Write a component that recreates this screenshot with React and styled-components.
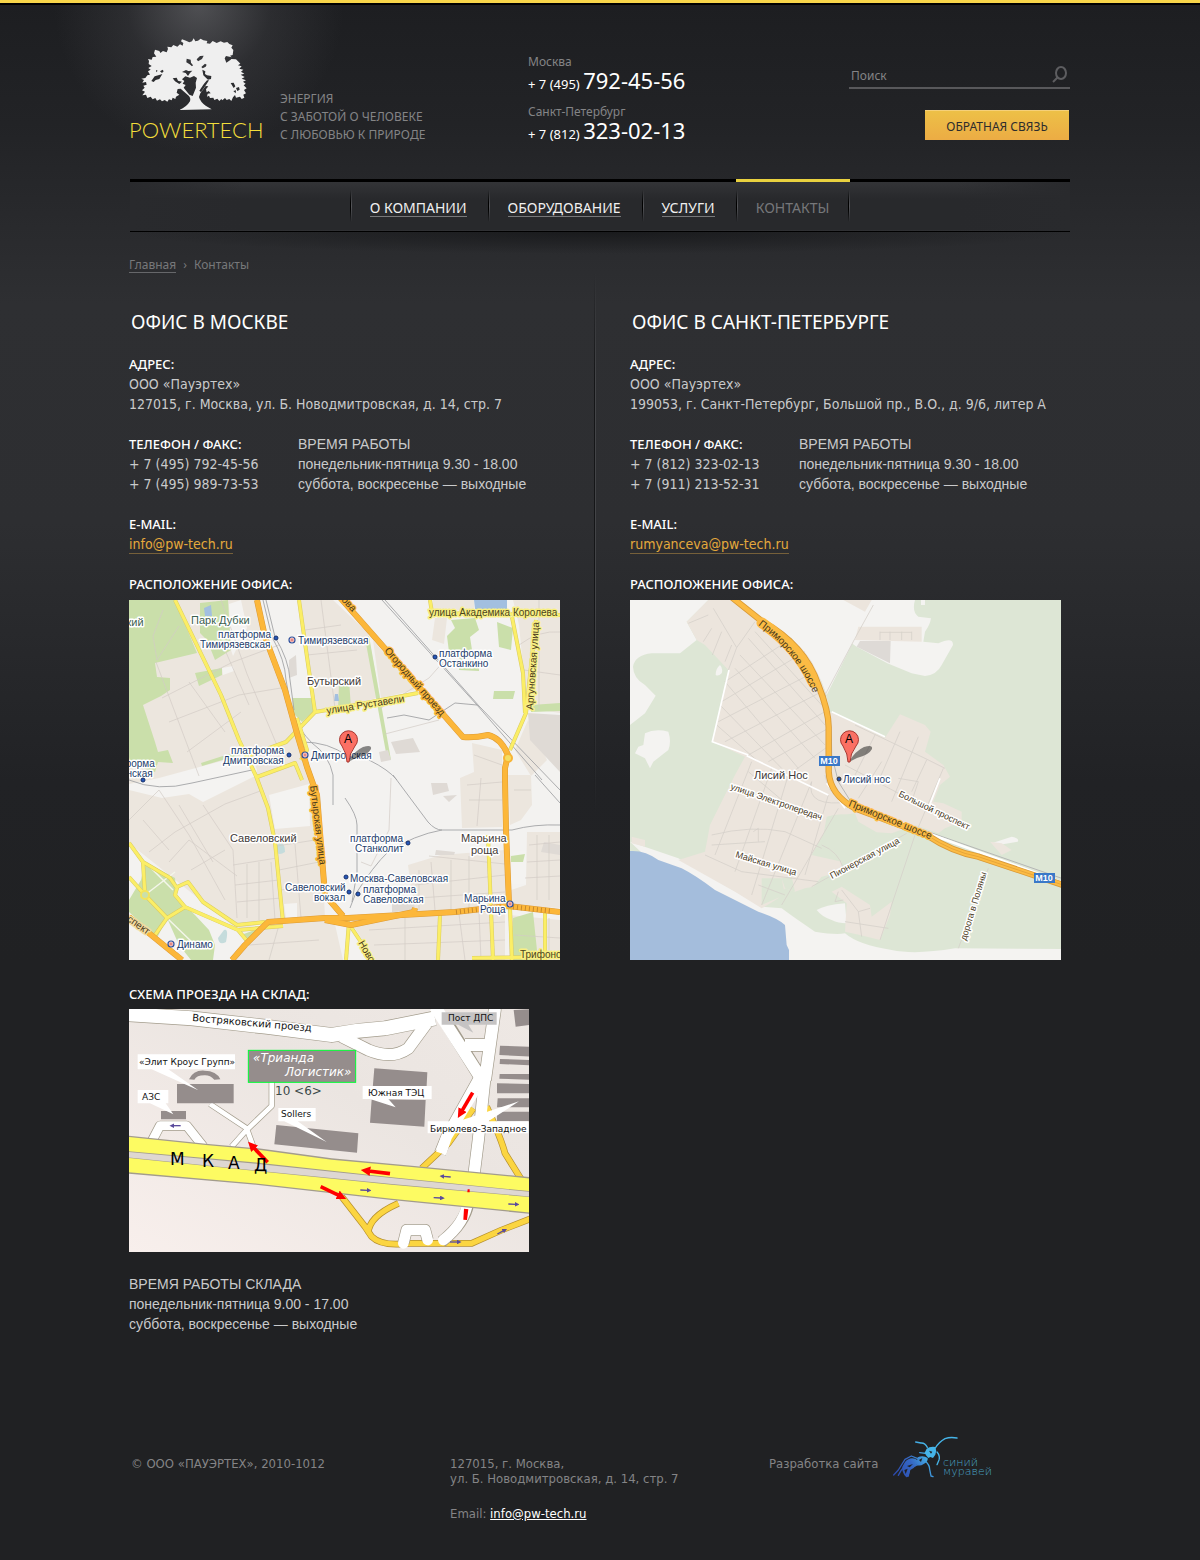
import React from 'react';
import styled, { createGlobalStyle } from 'styled-components';

const uiFont = '"Noto Sans", "Open Sans", sans-serif';
const textFont = '"DejaVu Sans Condensed", "Noto Sans", sans-serif';
const plainFont = '"Liberation Sans", Arial, sans-serif';

const GlobalStyle = createGlobalStyle`
  * {
    box-sizing: border-box;
  }

  body {
    margin: 0;
    background: #202123;
    color: #c9cacb;
    font-family: ${textFont};
    font-size: 14px;
    line-height: 20px;
  }

  h1, h2, h3, p, ul, ol, dl, dd {
    margin: 0;
    padding: 0;
    font-weight: 400;
  }

  ul, ol {
    list-style: none;
  }
`;

const Page = styled.div`
  border-top: 3px solid #f8d54a;
  background:
    radial-gradient(ellipse 145px 150px at 199px 0, rgba(130, 130, 134, 0.5), rgba(90, 90, 94, 0.24) 50%, transparent),
    linear-gradient(#1d1e21 0, #222326 120px, #2a2b2e 240px, #2e2f32 300px, #2d2e31 520px, #212225 780px, #202123 960px);
`;

const TopLine = styled.div`
  height: 2px;
  background: #000;
`;

const Wrap = styled.div`
  max-width: 942px;
  margin: 0 auto;
`;

const Header = styled.header`
  display: grid;
  grid-template-columns: 151px 248px 1fr 221px;
  align-items: start;
  padding: 33px 1px 35px 0;
  font-family: ${uiFont};
`;

const Logo = styled.a`
  display: block;
  color: #f3df3b;
  font-family: Lato, sans-serif;
  font-size: 22px;
  font-weight: 300;
  line-height: 24px;
  text-decoration: none;

  svg {
    display: block;
    margin-bottom: 7px;
  }
`;

const Slogan = styled.p`
  padding-top: 52px;
  color: #848486;
  font-size: 12px;
  line-height: 18px;
  text-transform: uppercase;
`;

const Phones = styled.dl`
  padding-top: 16px;

  dt {
    color: #848486;
    font-size: 12px;
    line-height: 16px;
  }

  dd {
    height: 24px;
    margin-bottom: 10px;
    color: #fff;
    font-size: 13px;
    line-height: 20px;
  }

  dd:last-child {
    margin-bottom: 0;
  }
`;

const PhoneNumber = styled.span`
  font-size: 22px;
`;

const Tools = styled.div`
  display: flex;
  flex-direction: column;
  align-items: flex-end;
  gap: 21px;
  padding-top: 26px;
`;

const Search = styled.form`
  display: flex;
  width: 100%;
  height: 25px;
  border-bottom: 2px solid #58585b;

  label {
    padding: 0 6px 0 2px;
    color: #848486;
    font-size: 12px;
    line-height: 24px;
  }

  input {
    flex: 1;
    min-width: 0;
    padding: 2px 0;
    border: 0;
    outline: 0;
    background: none;
    color: #c9cacb;
    font: 12px ${uiFont};
  }

  button {
    padding: 0 2px 2px 0;
    border: 0;
    background: none;
    cursor: pointer;
  }

  svg {
    display: block;
  }
`;

const FeedbackButton = styled.button`
  width: 144px;
  height: 30px;
  margin-right: 1px;
  padding: 2px 0 0;
  border: 0;
  border-top: 1px solid #f5d07a;
  background: linear-gradient(#edc047, #ecac44);
  color: #2c2c2d;
  font: 12px ${uiFont};
  text-transform: uppercase;
  cursor: pointer;
`;

const Nav = styled.nav`
  position: relative;
  margin: 0 1px;
  border-top: 3px solid #000;
  border-bottom: 1px solid #000;
  background:
    linear-gradient(90deg, #292a2d, transparent 12%, transparent 88%, #292a2d),
    linear-gradient(#333437, #28292c 34%, #28292c 98%, #38393c);
  font-family: ${uiFont};

  ul {
    display: flex;
    justify-content: center;
    height: 49px;
  }
`;

const NavShade = styled.div`
  height: 22px;
  margin: 0 1px;
  background: radial-gradient(ellipse 50% 100% at 50% 0, rgba(20, 21, 23, 0.75), transparent);
`;

const NavItem = styled.li`
  margin-top: -3px;
  padding: 17px 21px 0 20px;
  border-top: 3px solid ${props => (props.$active ? '#e9d13f' : 'transparent')};
  background:
    linear-gradient(transparent, #000 40%, #000 60%, transparent) left 8px / 1px 32px no-repeat,
    linear-gradient(transparent, #55565a 50%, transparent) 1px 8px / 1px 32px no-repeat;

  &:last-child {
    background:
      linear-gradient(transparent, #000 40%, #000 60%, transparent) left 8px / 1px 32px no-repeat,
      linear-gradient(transparent, #55565a 50%, transparent) 1px 8px / 1px 32px no-repeat,
      linear-gradient(transparent, #000 40%, #000 60%, transparent) right 1px top 8px / 1px 32px no-repeat,
      linear-gradient(transparent, #55565a 50%, transparent) right 8px / 1px 32px no-repeat;
  }

  a {
    display: block;
    border-bottom: 1px solid ${props => (props.$active ? 'transparent' : '#77787a')};
    color: ${props => (props.$active ? '#76777a' : '#f0f0f0')};
    font-size: 14px;
    line-height: 17px;
    text-decoration: none;
    text-transform: uppercase;
  }
`;

const Breadcrumbs = styled.ol`
  display: flex;
  gap: 7px;
  padding-top: 4px;
  color: #77787a;
  font-family: ${uiFont};
  font-size: 12px;
  line-height: 14px;

  a {
    display: block;
    border-bottom: 1px solid #66676a;
    color: inherit;
    text-decoration: none;
  }
`;

const Offices = styled.div`
  display: grid;
  grid-template-columns: 501fr 441fr;
`;

const Office = styled.section`
  padding-top: 35px;
  background: ${props => (props.$divided
    ? 'linear-gradient(transparent, #151618 20%, #151618 60%, transparent) right 35px top 0 / 1px 540px no-repeat, linear-gradient(transparent, #434447 20%, #434447 60%, transparent) right 34px top 0 / 1px 540px no-repeat'
    : 'none')};
`;

const OfficeTitle = styled.h2`
  margin-bottom: 18px;
  padding-left: 2px;
  color: #fff;
  font-family: ${uiFont};
  font-size: 19px;
  line-height: 28px;
  text-transform: uppercase;
`;

const Block = styled.div`
  margin-bottom: 20px;
`;

const MapBlock = styled.figure`
  margin: 0;

  figcaption {
    margin-bottom: ${props => props.$gap}px;
  }

  svg {
    display: block;
    width: 100%;
    max-width: ${props => props.$width}px;
    height: auto;
  }
`;

const Label = styled.h3`
  color: #fff;
  font-family: ${uiFont};
  font-size: 13px;
  font-weight: 500;
  text-transform: uppercase;
`;

const Columns = styled.div`
  display: grid;
  grid-template-columns: 169px 1fr;
  margin-bottom: 20px;
`;

const Hours = styled.div`
  font-family: ${plainFont};
  font-size: 14px;

  h3 {
    font-size: 14px;
    text-transform: uppercase;
  }
`;

const MailLink = styled.a`
  display: inline-block;
  border-bottom: 1px solid #76603a;
  color: #e5a93c;
  line-height: 17px;
  text-decoration: none;
`;

const MailRow = styled.p`
  height: 20px;
`;

const Warehouse = styled.section`
  padding-top: 24px;

  ${Hours} {
    margin-top: 22px;
  }
`;

const Footer = styled.footer`
  display: grid;
  grid-template-columns: 319px 319px 1fr;
  padding: 122px 0 39px 2px;
  color: #848486;
  font-size: 13px;
  line-height: 15px;

  p + p {
    margin-top: 20px;
  }

  p a {
    color: #fff;
  }
`;

const Developer = styled.a`
  display: flex;
  align-items: flex-start;
  gap: 10px;
  color: inherit;
  text-decoration: none;

  svg {
    margin-top: -20px;
  }
`;

function TreeIcon() {
  return (
    <svg width="132" height="73" viewBox="0 0 132 73" aria-hidden="true">
      <g transform="translate(-69 -38) scale(0.33333)">
        <path
          fill="#efefef"
          fillRule="evenodd"
          d="M358 330 Q380 321 390 304 Q393 294 386 287 L362 266 353 267 350 278 358 284 348 290 346 297 338 293 335 301 327 298 322 305 314 300 306 304 300 298 291 302 286 294 278 298 272 290 262 294 258 284 247 286 255 275 246 271 254 263 250 257 260 254 258 246 247 248 252 240 244 236 256 234 262 226 270 224 264 214 272 209 265 204 275 198 266 192 267 183 264 177 275 179 278 171 289 170 282 160 285 149 298 153 301 159 309 153 320 157 324 147 322 140 334 142 340 135 352 140 360 133 368 137 370 129 363 124 366 118 378 122 388 127 396 124 401 115 406 124 414 122 422 116 430 121 442 123 440 130 450 131 458 123 470 129 482 124 492 128 502 126 508 132 518 136 514 143 520 150 518 165 510 167 515 172 498 168 494 175 499 188 511 180 514 177 528 178 537 187 541 191 534 196 545 199 538 206 550 209 543 215 553 221 542 224 554 231 545 236 558 241 549 245 557 251 551 256 560 265 552 270 558 280 550 284 553 293 545 297 540 290 528 293 525 285 519 292 514 303 508 297 500 300 495 294 487 301 484 297 478 303 472 296 463 300 460 293 450 294 447 287 441 290 443 281 452 280 446 273 440 277 438 268 445 259 437 258 421 280 417 291 Q421 306 437 317 L455 328 Z
          M366 238 L376 229 390 233 402 228 411 234 407 248 408 263 398 288 388 284 371 263 377 255 368 251 373 243Z
          M380 176 L392 179 393 188 399 196 396 199 389 193 379 187Z
          M410 178 L420 168 431 167 426 177 414 184Z
          M424 201 L435 191 440 194 437 200 428 205Z
          M427 209 L436 214 435 222 441 226 454 228 453 237 444 239 430 226Z
          M366 216 L378 210 385 213 397 212 390 219 384 228 377 219Z
          M274 243 L284 229 300 224 307 222 298 237 287 240 281 246Z
          M300 214 L308 209 311 214 306 219Z
          M338 235 L350 233 354 242 366 245 358 252 345 244Z
          M288 210 L293 212 289 217Z
          M418 272 L432 251 441 241 447 241 438 255 423 276Z
          M512 249 L521 248 526 259 521 264 516 256Z
          M528 264 L537 261 539 269 532 273Z
          M520 273 L528 271 527 280Z"
        />
      </g>
    </svg>
  );
}

function AntIcon() {
  return (
    <svg width="108" height="46" viewBox="0 0 108 46" role="img" aria-label="Синий муравей">
      <defs>
        <linearGradient id="ant" x1="450" y1="170" x2="580" y2="90" gradientUnits="userSpaceOnUse">
          <stop offset="0" stopColor="#2a45a8" />
          <stop offset="0.45" stopColor="#3567c4" />
          <stop offset="0.8" stopColor="#45b4e8" />
        </linearGradient>
      </defs>
      <g transform="translate(-145 -16) scale(0.33333)">
        <g fill="none" stroke="url(#ant)" strokeLinecap="round" strokeLinejoin="round" strokeWidth="4">
          <path d="M577 84 Q588 66 606 56 Q622 50 642 54" />
          <path d="M553 82 Q546 68 534 69 L518 66" />
          <path d="M582 96 Q592 108 588 120 L582 134" />
          <path d="M546 122 Q560 134 560 148 L564 168 570 170" />
          <path d="M535 128 L516 138 506 128 498 150 496 168" />
          <path d="M524 126 L492 128 474 152 466 166" />
          <path d="M530 118 L505 108 486 118 466 150 452 165" />
          <path d="M548 100 L530 98" />
        </g>
        <path fill="url(#ant)" d="M551 86 Q560 79 577 81 Q582 92 577 104 L570 114 562 111 556 114 549 106 545 98Z" />
        <path fill="url(#ant)" d="M524 112 Q540 104 554 114 Q556 124 542 132 Q530 140 520 134Z" />
        <path fill="url(#ant)" d="M486 126 Q504 106 526 122 Q520 142 502 150 Q498 172 490 172 Q476 158 478 140Z" />
        <path fill="#202123" d="M558 92 L568 95 564 101Z M492 138 L510 132 500 142Z M484 150 L494 146 488 162Z M528 120 L538 114 534 126Z" />
      </g>
      <g fill="#4aa3c4" fontFamily='"DejaVu Sans", sans-serif' fontSize="11" fontWeight="200">
        <text x="55" y="30">синий</text>
        <text x="55" y="39">муравей</text>
      </g>
    </svg>
  );
}

function Roads({ paths, casing, fill, width }) {
  return (
    <g fill="none" strokeLinejoin="round">
      {paths.map(d => <path key={d} d={d} stroke={casing} strokeWidth={width + 1} />)}
      {paths.map(d => <path key={d} d={d} stroke={fill} strokeWidth={width} />)}
    </g>
  );
}

const haloProps = { paintOrder: 'stroke', strokeLinejoin: 'round', strokeWidth: 3 };

function MapLabels({ items, size, color, halo }) {
  return (
    <g fill={color} stroke={halo} fontSize={size} {...haloProps}>
      {items.map(([x, y, text]) => <text key={x + text + y} x={x} y={y}>{text}</text>)}
    </g>
  );
}

function StreetLabel({ x, y, angle, halo, children, size = 10, color = '#4a3a1c' }) {
  return (
    <text transform={`translate(${x} ${y}) rotate(${angle})`} fill={color} stroke={halo} fontSize={size} {...haloProps}>
      {children}
    </text>
  );
}

function Pin({ x, y }) {
  return (
    <g transform={`translate(${x} ${y})`}>
      <path d="M0 0 Q6 -11 15 -15 Q24 -18 23 -13 Q20 -7 8 -4Z" fill="#000" opacity="0.45" />
      <path
        d="M-1 0 Q-1 -8 -6 -16 A9 9 0 1 1 7 -16 Q1 -8 1 0Z"
        fill="#fb7064"
        stroke="#a8352e"
        strokeWidth="1"
      />
      <text x="0" y="-19" fontSize="12" fill="#000" textAnchor="middle">A</text>
    </g>
  );
}

const moscowGreens = [
  'M0 0H46L68 53 26 63 28 77 41 78 41 90 32 96 14 105 26 142 29 152 39 150 44 163 29 162 26 172 0 163Z',
  'M71 3L99 0 102 50 86 60 78 40 71 33Z',
  'M66 73L93 68 93 75 70 86Z',
  'M72 163L122 147 124 151 73 166Z',
  'M164 98L184 98 184 112 173 122 163 112Z',
  'M16 262L46 278 48 298 66 315 80 330 86 345 84 360 62 360 50 345 38 318 28 338 0 312 0 300 12 280Z',
  'M112 335L131 328 120 345Z',
  'M384 318L404 312 409 360H384Z',
  'M322 20L346 18 350 30 341 37 343 50 333 60 320 52 318 36 326 28Z',
  'M368 22L384 28 382 50 370 47Z',
  'M330 62L350 60 350 71 330 70Z',
  'M365 91L386 91 384 99 364 99Z',
  'M402 105L431 103 431 111 402 112Z',
  'M382 256L396 254 394 262 382 262Z',
  'M210 85L220 80 222 108 209 110Z',
  'M236 38L240 36 262 160 258 158Z',
];

const moscowBeige = [
  'M0 0H128L156 92 169 137 178 167 193 258 196 318 139 322 109 330 0 243Z',
  'M172 0H204L239 33 251 97 216 107 186 112Z',
  'M244 40L286 90 252 98Z',
  'M384 0H431V113L398 108 390 25Z',
  'M304 0H345V9L304 12Z',
  'M306 18L318 18 315 44 303 40Z',
  'M343 143L373 150 373 227 333 228 331 178 345 172Z',
  'M379 175H402L403 205 392 220 381 225Z',
  'M399 120L386 150 402 176 418 160Z',
  'M279 265L312 255 376 250V360H246L222 322 285 310Z',
  'M398 232H431V308L382 305V290L397 285Z',
  'M380 315L431 320V360H380Z',
  'M106 360L136 325 205 320 214 360Z',
];

const moscowGaps = [
  'M0 184L30 178 122 153 128 170 126 176 74 202 60 194 33 198 0 190Z',
  'M140 195L180 184 181 226 146 229Z',
  'M93 68L104 66 105 71 94 75Z',
  'M100 4L112 0 118 28 104 56 102 50Z',
  'M384 252L397 250V284H382Z',
  'M155 304L168 303V318H157Z',
];

const moscowBlocks = [
  'M399 113L431 115V172L401 140Z',
  'M262 142L284 138 291 152 267 154Z',
  'M250 152L259 150 262 160 252 162Z',
  'M302 183L318 183 320 191 304 195Z',
  'M314 196L328 195 320 202Z',
  'M307 250L326 252 325 255 306 255Z',
  'M415 242L431 245V255L412 252Z',
  'M263 304L285 302 286 311 263 312Z',
  'M160 60L167 55 168 75 160 78Z',
];

const moscowStreets = [
  'M27 62L70 176', 'M33 98L88 70 104 62 150 45', 'M40 122L110 95 152 88', 'M60 82L96 132', 'M58 152L112 112',
  'M92 0L118 74 150 150', 'M50 26L28 60 24 36 34 10', 'M96 50L120 105', 'M176 30L212 25', 'M178 55L228 50', 'M180 82L232 78',
  'M192 0L206 108', 'M0 220L30 190 60 235 96 300', 'M20 252L46 232 96 204 134 190', 'M40 262L60 240 108 276', 'M74 205L104 250 108 318',
  'M104 265L148 258', 'M106 285L150 280', 'M108 302L152 298', 'M118 264V318', 'M130 262V320', 'M142 262L146 320', 'M148 246L186 240',
  'M150 270L190 262', 'M152 290L194 284', 'M165 232L172 318', 'M62 270L96 250', 'M50 205L84 262', 'M14 220L40 250',
  'M290 270V310', 'M302 262L306 310', 'M322 260V310', 'M340 256V310', 'M286 285L376 275', 'M290 298L376 292', 'M300 256L376 264',
  'M240 330L376 322', 'M245 345L376 340', 'M276 318V360', 'M330 314L336 360', 'M350 312L352 360', 'M120 345L190 340', 'M150 325L140 360',
  'M400 245L431 242', 'M398 262L431 260', 'M396 278L431 276', 'M408 235V300', 'M420 235V300', 'M338 185L373 182', 'M340 200L373 200',
  'M352 178L348 226', 'M385 190L402 190', 'M390 45Q410 30 431 32', 'M395 70L431 75', 'M410 0V110', 'M345 155L373 165', 'M262 178L260 230 242 266 232 262',
  'M385 335L431 338', 'M420 318V360', 'M256 134L310 120', 'M252 108L300 78 316 60',
];

const moscowRails = [
  'M253 0L348 105 413 180', 'M256 0L350 106 431 190', 'M406 175L431 203',
  'M264 175L299 222Q306 230 313 230L383 230Q405 224 431 225',
  'M221 308L226 295Q245 265 259 252Q285 235 313 230',
  'M134 0L143 37Q156 60 157 80L163 113Q170 130 183 143Q200 155 204 175V205',
  'M137 0L146 37Q160 60 161 80L165 110', 'M216 198Q228 215 228 225V272L223 302',
  'M258 118L275 115 300 120 326 103 348 105', 'M0 180Q29 192 63 183L123 170', 'M240 160Q260 170 268 180', 'M173 142Q200 142 218 156',
];

const moscowYellow = [
  'M46 0L92 95 110 140 127 176 139 208 146 242 154 322', 'M170 0L178 57 186 112', 'M121 155L157 142 186 112 216 107 289 93',
  'M128 177L166 163 173 180', 'M301 0L303 13 431 15', 'M407 20L397 113 381 150', 'M383 17L394 73 396 113', 'M311 315L309 360',
  'M359 235L364 360', 'M381 308L383 360', 'M416 313V360', 'M343 358L431 357', 'M216 318L244 360', 'M220 322L217 360',
  'M0 243L14 262 41 278 48 288 46 295 56 307 109 330 119 342', 'M48 287L59 282 74 302 108 325 136 322', 'M14 262L16 295 38 318 26 335',
  'M0 277L16 295', 'M38 318L56 307', 'M109 330L154 326', 'M168 118L178 150 172 160',
];

const moscowOrange = [
  'M128 0L136 37 156 90 169 137 178 167 188 195 193 258 196 295 214 316',
  'M103 360L116 345 139 322 196 318 219 318 326 312 379 306 431 312',
  'M208 -6L259 52 313 113 334 137Q345 138 359 135Q372 138 379 155L376 168V180L377 230 380 304',
  'M0 317L53 360',
  'M196 320L222 325 285 312 286 308',
];

const moscowDots = [[147, 38], [306, 57], [160, 155], [279, 243], [217, 277], [220, 292], [229, 294], [14, 180]];
const moscowMetro = [[163, 40], [176, 155], [42, 344], [381, 304]];

function MoscowMap() {
  return (
    <svg viewBox="0 0 431 360" role="img" aria-label="Офис в Москве на карте" fontFamily={plainFont}>
      <rect width="431" height="360" fill="#f3f2f0" />
      <path d={moscowBeige.join('')} fill="#ece6de" />
      <path d={moscowGaps.join('')} fill="#f4f3f1" />
      <path d={moscowGreens.join('')} fill="#cadfaa" />
      <path d={moscowBlocks.join('')} fill="#dfdad5" />
      <path d="M345 0H378V9H346Z M75 8L82 5 83 16 76 16Z M206 94L209 94 210 101 205 101Z" fill="#a2bfe0" />
      <path d="M148 245Q156 240 156 252Q150 256 147 252Z M95 330Q100 328 97 342Q90 346 89 338Z" fill="#c5dcdc" />
      <path d={moscowStreets.join('')} fill="none" stroke="#d3ccc6" strokeWidth="0.7" />
      <path d={moscowRails.join('')} fill="none" stroke="#a3a4a6" strokeWidth="0.9" />
      <path d="M16 262L44 290M16 295L46 272M38 318L66 345" stroke="#f4f6ea" strokeWidth="1.5" />
      <Roads paths={moscowYellow} casing="#d9cb62" fill="#fbee66" width={3} />
      <circle cx="16" cy="295" r="4" fill="#cadfaa" stroke="#f3e35c" strokeWidth="2" />
      <Roads paths={moscowOrange} casing="#dc9a35" fill="#fcb73a" width={5} />
      <circle cx="379" cy="158" r="4" fill="#f4dd62" stroke="#f7b436" strokeWidth="2" />
      <path d="M327 312L372 307M384 307L422 311" stroke="#c8892c" strokeWidth="5" strokeDasharray="1 3" />

      <MapLabels
        items={[[62, 24, 'Парк Дубки'], [-8, 26, 'ский']]}
        size={11}
        color="#3c6150"
        halo="#fff"
      />
      <MapLabels
        items={[[178, 85, 'Бутырский'], [101, 242, 'Савеловский'], [332, 242, 'Марьина'], [342, 254, 'роща']]}
        size={11}
        color="#3f3a38"
        halo="#fff"
      />
      <MapLabels
        items={[
          [89, 38, 'платформа'], [71, 48, 'Тимирязевская'], [169, 44, 'Тимирязевская'], [310, 57, 'платформа'], [310, 67, 'Останкино'],
          [102, 154, 'платформа'], [94, 164, 'Дмитровская'], [182, 159, 'Дмитровская'], [221, 242, 'платформа'], [226, 252, 'Станколит'],
          [221, 282, 'Москва-Савеловская'], [234, 293, 'платформа'], [234, 303, 'Савеловская'], [156, 291, 'Савеловский'],
          [185, 301, 'вокзал'], [48, 348, 'Динамо'], [335, 302, 'Марьина'], [351, 313, 'Роща'], [-6, 167, 'форма'], [-8, 177, 'енская'],
        ]}
        size={10}
        color="#1d3d6b"
        halo="#fff"
      />
      <g fill="#2456b8" stroke="#17306b" strokeWidth="1">
        {moscowDots.map(([x, y]) => <circle key={x} cx={x} cy={y} r="2" />)}
      </g>
      {moscowMetro.map(([x, y]) => (
        <g key={x}>
          <circle cx={x} cy={y} r="3" fill="#fff" stroke="#2f4f9b" strokeWidth="1.2" />
          <path d={`M${x - 1} ${y - 2}v4M${x + 1} ${y - 2}v4M${x - 1} ${y}h2`} stroke="#d9453e" strokeWidth="0.8" />
        </g>
      ))}
      <MapLabels
        items={[[300, 16, 'улица Академика Королева'], [391, 358, 'Трифоновская']]}
        size={10}
        color="#4b4520"
        halo="#f8ef83"
      />
      <StreetLabel x={198} y={114} angle={-9} halo="#f8ef83">улица Руставели</StreetLabel>
      <StreetLabel x={404} y={110} angle={-86} halo="#f8ef83">Аргуновская улица</StreetLabel>
      <StreetLabel x={181} y={186} angle={83} halo="#fcb73a">Бутырская улица</StreetLabel>
      <StreetLabel x={255} y={51} angle={49} halo="#fcb73a">Огородный проезд</StreetLabel>
      <StreetLabel x={209} y={-3} angle={47} halo="#fcb73a">кова</StreetLabel>
      <StreetLabel x={-16} y={311} angle={35} halo="#f2dba0">проспект</StreetLabel>
      <StreetLabel x={229} y={343} angle={60} halo="#f8ef83">Ново</StreetLabel>
      <Pin x={219} y={162} />
    </svg>
  );
}

function PetersburgMap() {
  return (
    <svg viewBox="0 0 431 360" role="img" aria-label="Офис в Санкт-Петербурге на карте" fontFamily={plainFont}>
      <rect width="431" height="360" fill="#dde6d5" />
      <g transform="translate(-5 -5) scale(0.33333)">
        <path
          fill="#f4f3f1"
          d="M15 15H720L745 30 690 130 605 300 590 260 560 200 500 130 330 15H250L185 80 215 135 165 175 80 175Q30 180 24 215Q25 250 60 270L92 302 60 355 15 390Z
          M720 15H870Q860 50 880 65L918 70Q915 90 900 110L895 140 940 145Q985 125 984 150L950 210Q935 240 900 243L860 235 787 205 695 155 680 145Z
          M60 415Q90 400 130 410Q140 440 130 465L85 500 75 520 60 490 30 475 40 455 55 450Z
          M285 210Q295 220 290 235Q280 245 272 240Q272 220 285 210Z
          M888 15H900V30H888Z M1100 745L1160 725Q1185 730 1178 740L1120 750Z
          M575 945Q600 930 660 925L665 985Q640 985 620 975Q590 965 575 945Z
          M15 740L160 790 410 935 470 940Q510 970 570 1010 630 1020 660 1015Q700 1050 800 1065Q870 1080 990 1060L1310 1062V1100H400Z"
        />
        <path
          fill="#ece5dd"
          d="M250 15H330L400 70Q520 130 560 200Q600 270 615 350L690 385 780 428 825 358 900 390 917 410 900 470 955 510 975 545 945 570 925 620 955 625 1010 650 1010 680 960 700 940 715 870 690 800 715 755 712 700 680 690 655 610 665 605 700 560 780 650 800 650 830 590 845 565 875 540 880 510 890 480 880 460 910 410 940 330 890 160 795 240 770 255 690 330 540 360 485 262 440 310 225 240 150 215 135 185 80Z
          M655 15H740L720 50Z M700 95H890V140L690 135Z
          M620 890L650 875 735 930 740 965 800 920 795 960 765 1035 705 1020 660 1010 665 925Z
          M1095 740L1130 745 1160 765 1130 780Z M20 725L60 735 60 755 20 745Z"
        />
        <path fill="#dedad6" d="M705 138L797 138 795 205 695 155Z" />
        <path
          fill="#dde6d5"
          d="M605 665Q650 650 690 665L690 690 755 715 740 745 790 740 790 790 740 800 700 800 655 770 590 750Z M470 850L500 845 510 890 480 880Z M410 850L470 850 480 900 410 930Z"
        />
        <path
          fill="#a4bddc"
          d="M15 768Q60 765 100 795L170 820Q210 840 270 885L400 950Q460 970 480 990L485 1050 492 1065V1100H15Z"
        />
        <g fill="none" stroke="#d5d0ca" strokeWidth="2.4">
          <path d="M265 40L335 158 390 80M335 158L310 225M190 85L250 60M235 140L260 100M262 180L290 110M300 200L320 150" />
          <path d="M300 260L520 520M285 330L470 520M275 390L400 500M330 220L570 490M345 180L600 450M370 130L600 390M390 110L590 330" />
          <path d="M300 260L500 130M290 320L540 170M280 380L570 230M300 440L590 290M370 480L600 350M430 500L610 400M490 540L615 450" />
          <path d="M690 390L900 490 960 520M750 420L690 540M825 410L760 560M880 425L800 620M660 510L830 600M700 610L770 500M955 520L870 720M820 550L880 560 860 620M905 495L860 590" />
          <path d="M380 500L270 780M440 520L330 830M490 540L380 900M560 560L410 930M610 600L540 840M640 640L470 930M370 530L500 640M560 560Q540 640 680 620M600 540Q610 600 650 610" />
          <path d="M260 720Q380 690 480 710L590 760M240 780L350 830 580 860M260 750L420 740M400 870L480 900M385 710L400 700 400 740" />
          <path d="M870 720L765 1035M845 715L560 875M650 885L700 950 735 940M700 950L710 1025M660 980L790 1000M640 890L630 920 655 915M1090 820L1000 1060" />
          <path d="M765 110V135M795 110V135M830 110V135M860 110V135M765 112H860M745 30L690 130 600 300M590 750Q640 770 655 820" />
        </g>
        <g fill="none" stroke="#fff" strokeWidth="5">
          <path d="M312 225L262 440 370 480M365 482L610 600M620 350L780 425M945 550L910 640M605 565L660 640" />
        </g>
        <path fill="none" stroke="#b5b6b6" strokeWidth="3" d="M600 300Q622 400 620 480L640 560 690 640 880 700 1310 850" />
        <path fill="none" stroke="#fff" strokeWidth="8" d="M900 712L1310 862" />
        <path fill="none" stroke="#d99a37" strokeWidth="19" d="M318 5L410 78Q540 150 580 270Q612 350 611 400V530Q615 600 690 640L905 720Q980 770 1060 785L1320 872" />
        <path fill="none" stroke="#fcbb44" strokeWidth="14" d="M318 5L410 78Q540 150 580 270Q612 350 611 400V530Q615 600 690 640L905 720Q980 770 1060 785L1320 872" />
        <path fill="none" stroke="#d99a37" strokeWidth="2" d="M905 720Q980 770 1060 785L1320 872" />
      </g>
      {/* the bend of the highway carries its own name */}
      <path d="M132 23Q167 47 183 82" fill="none" stroke="#fcbb44" strokeWidth="11" strokeLinecap="round" />
      <path id="highway" d="M128 25Q162 49 181 88L190 108" fill="none" />
      <text fontSize="10" fill="#4a3a1c">
        <textPath href="#highway">Приморское шоссе</textPath>
      </text>
      <StreetLabel x={218} y={206} angle={22} halo="#fcbb44">Приморское шоссе</StreetLabel>
      <StreetLabel x={100} y={189} angle={19} halo="#fff" size={9}>улица Электропередач</StreetLabel>
      <StreetLabel x={268} y={196} angle={26} halo="#fff" size={9}>Большой проспект</StreetLabel>
      <StreetLabel x={105} y={257} angle={17} halo="#fff" size={9}>Майская улица</StreetLabel>
      <StreetLabel x={202} y={279} angle={-28} halo="#fff" size={9}>Пионерская улица</StreetLabel>
      <StreetLabel x={336} y={341} angle={-73} halo="#fff" size={9}>дорога в Поляны</StreetLabel>
      <MapLabels items={[[124, 179, 'Лисий Нос']]} size={11} color="#3f3a38" halo="#fff" />
      <MapLabels items={[[213, 183, 'Лисий нос']]} size={10} color="#1d3d6b" halo="#fff" />
      <circle cx="209" cy="179" r="2" fill="#2456b8" stroke="#333" />
      <rect x="189" y="156" width="21" height="10" fill="#3a78c8" />
      <rect x="404" y="273" width="21" height="10" fill="#3a78c8" />
      <g fill="#fff" fontSize="9" fontWeight="700" textAnchor="middle">
        <text x="199" y="164">M10</text>
        <text x="414" y="281">M10</text>
      </g>
      <Pin x={219} y={162} />
    </svg>
  );
}

function Arrow({ d, color, size }) {
  return <path d={d} fill="none" stroke={color} strokeWidth={size} markerEnd={`url(#head-${color.slice(1)})`} />;
}

function WarehouseMap() {
  return (
    <svg viewBox="0 0 400 243" role="img" aria-label="Схема проезда на склад" fontFamily='"DejaVu Sans", sans-serif'>
      <defs>
        <marker id="head-ff0000" viewBox="0 0 10 10" refX="2" refY="5" markerWidth="2.6" markerHeight="2.6" orient="auto">
          <path d="M0 0L10 5 0 10Z" fill="#f00" />
        </marker>
        <marker id="head-5a4a9c" viewBox="0 0 10 10" refX="2" refY="5" markerWidth="3.6" markerHeight="3.6" orient="auto">
          <path d="M0 0L10 5 0 10Z" fill="#5a4a9c" />
        </marker>
        <linearGradient id="land" x1="0" y1="1" x2="1" y2="0">
          <stop offset="0" stopColor="#f8efec" />
          <stop offset="0.6" stopColor="#ebe5e1" />
          <stop offset="1" stopColor="#eee8e4" />
        </linearGradient>
      </defs>
      <rect width="400" height="243" fill="url(#land)" />
      <g transform="translate(-4 -29) scale(0.33333)">
        {/* side streets */}
        <g fill="none" strokeLinejoin="round">
          <g stroke="#a39c8c">
            <path strokeWidth="18" d="M440 305V378L360 455 320 500M255 372L365 445 385 500" />
            <path strokeWidth="30" d="M80 485L105 437H185L235 500" />
            <path strokeWidth="46" d="M0 102L200 115 420 140 620 165Q700 150 780 145L930 115" />
            <path strokeWidth="38" d="M650 170L730 210Q800 240 850 205L905 130" />
            <path strokeWidth="40" d="M960 120L1065 290M1110 85L1080 300M1020 195H1095" />
            <path strokeWidth="36" d="M1065 290L965 470 945 520" />
            <path strokeWidth="38" d="M1080 290L1060 480 1045 600" />
          </g>
          <g stroke="#fff">
            <path strokeWidth="14" d="M440 305V378L360 455 320 500M255 372L365 445 385 500" />
            <path strokeWidth="26" d="M80 485L105 437H185L235 500" />
            <path strokeWidth="42" d="M0 102L200 115 420 140 620 165Q700 150 780 145L930 115" />
            <path strokeWidth="34" d="M650 170L730 210Q800 240 850 205L905 130" />
            <path strokeWidth="36" d="M930 80L1065 290M1110 85L1080 300M1020 195H1095" />
            <path strokeWidth="32" d="M1065 290L965 470 945 520" />
          </g>
          <path stroke="#b58f2e" strokeWidth="20" d="M1085 380Q1130 480 1140 520L1190 600M1045 385L970 490 890 565M650 650L720 740 740 770Q770 800 850 790L1040 790 1130 750 1220 715M730 760Q730 710 820 670" />
          <path stroke="#fbd541" strokeWidth="16" d="M1085 380Q1130 480 1140 520L1190 600M1045 385L970 490 890 565M650 650L720 740 740 770Q770 800 850 790L1040 790 1130 750 1220 715M730 760Q730 710 820 670" />
          <path stroke="#fff" strokeWidth="34" d="M1080 290L1060 480 1045 600" />
          <path stroke="#fff" strokeWidth="32" d="M1050 330L965 470 948 520" />
          <path stroke="#a39c8c" strokeWidth="36" d="M1030 670Q1020 730 950 785M835 790L845 750H900L908 780" />
          <path stroke="#fff" strokeWidth="32" strokeLinecap="round" d="M1030 660Q1020 730 955 780M835 790L845 750H900L908 780" />
        </g>
        {/* ring road */}
        <path fill="#a39c8c" d="M0 466L250 492 400 505 620 535 860 557 1220 592V702L800 660 400 615 0 580Z" />
        <path fill="#ded7d2" d="M0 515L400 552 800 594 1220 636V650L800 612 400 572 0 531Z" />
        <path fill="#fdfb62" d="M0 470L250 496 400 509 620 539 860 561 1220 596V634L800 592 400 548 0 513Z" />
        <path fill="#fdfb62" d="M0 533L400 574 800 614 1220 652V698L800 656 400 611 0 576Z" />
        {/* buildings */}
        <g fill="#958d8c">
          <path d="M156 312H326V370H156Z M108 393H183V418H108Z M454 435L700 460 696 518 448 493Z M748 265L907 277 904 335 743 325Z M740 358L902 360 898 440 735 428Z" />
          <path d="M192 298Q205 270 238 272Q275 272 286 298L268 299Q255 285 238 286Q215 286 208 299Z" />
          <path d="M1125 197L1215 200V230L1123 225Z M1125 237L1215 240V256L1124 252Z M1124 282H1215V299L1123 296Z M1116 310L1215 312V340H1116Z M1118 355H1215V382H1116Z M1116 395H1215V424H1116Z M1166 90L1215 88V135L1172 140Z" />
        </g>
        <path fill="#c5c3c3" d="M950 97H1115V134H1030L1045 158 1000 134H950Z" />
        <path
          fill="#fff"
          d="M38 223H330V268H130L220 331 80 268H38Z M38 330H130V370H122L145 403 75 370H38Z M460 384H572V424H518L605 486 478 424H460Z M713 318H920V357H790L812 382 735 357H713Z M908 424H1210V460H908Z M1000 424L1182 364 1090 424Z"
        />
        <rect x="370" y="211" width="322" height="96" fill="#958d8c" stroke="#0f3" strokeWidth="3" />
        <g>
          <Arrow color="#ff0000" size={11} d="M1043 338L1010 394" />
          <Arrow color="#ff0000" size={11} d="M428 547L385 502" />
          <Arrow color="#ff0000" size={11} d="M795 581L730 573" />
          <Arrow color="#ff0000" size={11} d="M587 620L643 647" />
          <path fill="#f00" d="M1017 686L1030 688 1026 720 1015 719Z M1028 628H1034V637H1027Z" />
          <Arrow color="#5a4a9c" size={4} d="M167 437H145" />
          <Arrow color="#5a4a9c" size={4} d="M977 591L955 589" />
          <Arrow color="#5a4a9c" size={4} d="M706 630L728 631" />
          <Arrow color="#5a4a9c" size={4} d="M926 653L948 654" />
          <Arrow color="#5a4a9c" size={4} d="M1150 672L1172 673" />
          <Arrow color="#5a4a9c" size={4} d="M1117 762L1136 752" />
          <Arrow color="#5a4a9c" size={4} d="M975 786L998 786" />
        </g>
      </g>
      <StreetLabel x={63} y={12} angle={5} halo="#fff" color="#111">Востряковский проезд</StreetLabel>
      <g fontSize="9" fill="#111">
        <text x="10" y="56">«Элит Кроус Групп»</text>
        <text x="13" y="91">АЗС</text>
        <text x="152" y="108">Sollers</text>
        <text x="239" y="87">Южная ТЭЦ</text>
        <text x="301" y="123">Бирюлево-Западное</text>
        <text x="319" y="12">Пост ДПС</text>
      </g>
      <g fontSize="12" fill="#fff" fontStyle="italic">
        <text x="124" y="53">«Трианда</text>
        <text x="156" y="67">Логистик»</text>
      </g>
      <text x="146" y="86" fontSize="12" fill="#3b4a4a">10 &lt;6&gt;</text>
      <g fontSize="17" fill="#000">
        <text x="41" y="156">М</text>
        <text x="73" y="158">К</text>
        <text x="99" y="160">А</text>
        <text x="125" y="162">Д</text>
      </g>
    </svg>
  );
}

const menu = ['О компании', 'Оборудование', 'Услуги', 'Контакты'];

const offices = [
  {
    title: 'Офис в Москве',
    address: '127015, г. Москва, ул. Б. Новодмитровская, д. 14, стр. 7',
    phones: ['+ 7 (495) 792-45-56', '+ 7 (495) 989-73-53'],
    email: 'info@pw-tech.ru',
    Map: MoscowMap,
  },
  {
    title: 'Офис в Санкт-Петербурге',
    address: '199053, г. Санкт-Петербург, Большой пр., В.О., д. 9/6, литер А',
    phones: ['+ 7 (812) 323-02-13', '+ 7 (911) 213-52-31'],
    email: 'rumyanceva@pw-tech.ru',
    Map: PetersburgMap,
  },
];

function WorkingHours({ title, weekdays }) {
  return (
    <Hours>
      <h3>{title}</h3>
      <p>понедельник-пятница {weekdays}</p>
      <p>суббота, воскресенье — выходные</p>
    </Hours>
  );
}

function App() {
  return (
    <Page>
      <GlobalStyle />
      <TopLine />
      <Wrap>
        <Header>
          <Logo href="#">
            <TreeIcon />
            POWERTECH
          </Logo>
          <Slogan>
            Энергия<br />
            С заботой о человеке<br />
            С любовью к природе
          </Slogan>
          <Phones>
            <dt>Москва</dt>
            <dd>+ 7 (495) <PhoneNumber>792-45-56</PhoneNumber></dd>
            <dt>Санкт-Петербург</dt>
            <dd>+ 7 (812) <PhoneNumber>323-02-13</PhoneNumber></dd>
          </Phones>
          <Tools>
            <Search>
              <label htmlFor="search">Поиск</label>
              <input id="search" type="text" />
              <button type="button" aria-label="Найти">
                <svg width="16" height="17" viewBox="0 0 16 17" fill="none" stroke="#5d5d60" strokeWidth="2">
                  <ellipse cx="9" cy="7" rx="5" ry="6" />
                  <path d="M5.5 11.500L1 16" />
                </svg>
              </button>
            </Search>
            <FeedbackButton type="button">Обратная связь</FeedbackButton>
          </Tools>
        </Header>

        <Nav>
          <ul>
            {menu.map(item => (
              <NavItem key={item} $active={item === 'Контакты'}>
                <a href="#">{item}</a>
              </NavItem>
            ))}
          </ul>
        </Nav>
        <NavShade />

        <Breadcrumbs>
          <li><a href="#">Главная</a></li>
          <li aria-hidden="true">›</li>
          <li>Контакты</li>
        </Breadcrumbs>

        <main>
          <Offices>
            {offices.map(({ title, address, phones, email, Map }, index) => (
              <Office key={title} $divided={index === 0}>
                <OfficeTitle>{title}</OfficeTitle>
                <Block>
                  <Label>Адрес:</Label>
                  <p>ООО «Пауэртех»</p>
                  <p>{address}</p>
                </Block>
                <Columns>
                  <div>
                    <Label>Телефон / факс:</Label>
                    {phones.map(phone => <p key={phone}>{phone}</p>)}
                  </div>
                  <WorkingHours title="Время работы" weekdays="9.30 - 18.00" />
                </Columns>
                <Block>
                  <Label>E-mail:</Label>
                  <MailRow><MailLink href={`mailto:${email}`}>{email}</MailLink></MailRow>
                </Block>
                <MapBlock $gap={6} $width={431}>
                  <Label as="figcaption">Расположение офиса:</Label>
                  <Map />
                </MapBlock>
              </Office>
            ))}
          </Offices>

          <Warehouse>
            <MapBlock $gap={5} $width={400}>
              <Label as="figcaption">Схема проезда на склад:</Label>
              <WarehouseMap />
            </MapBlock>
            <WorkingHours title="Время работы склада" weekdays="9.00 - 17.00" />
          </Warehouse>
        </main>

        <Footer>
          <p>© ООО «ПАУЭРТЕХ», 2010-1012</p>
          <div>
            <p>
              127015, г. Москва,<br />
              ул. Б. Новодмитровская, д. 14, стр. 7
            </p>
            <p>Email: <a href="mailto:info@pw-tech.ru">info@pw-tech.ru</a></p>
          </div>
          <Developer href="#">
            Разработка сайта
            <AntIcon />
          </Developer>
        </Footer>
      </Wrap>
    </Page>
  );
}

export default App;
